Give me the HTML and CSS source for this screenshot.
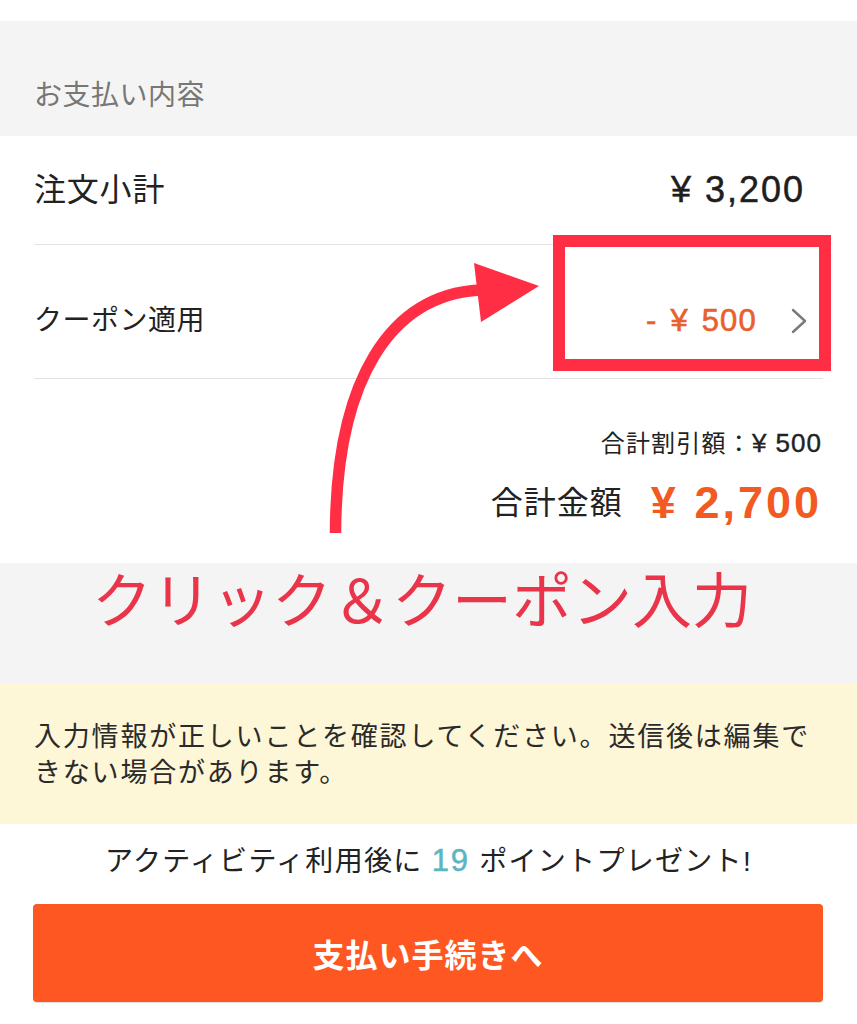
FILE: index.html
```html
<!DOCTYPE html>
<html lang="ja">
<head>
<meta charset="utf-8">
<title>お支払い内容</title>
<link rel="stylesheet" href="styles.css">
</head>
<body>
<div class="page">
  <div class="top-gap"></div>
  <div class="section-head">お支払い内容</div>
  <div class="list">
    <div class="row row-subtotal">
      <span class="label label-lg">注文小計</span>
      <span class="amount">¥ 3,200</span>
    </div>
    <div class="row row-coupon">
      <span class="label">クーポン適用</span>
      <span class="coupon-value">
        <span class="discount">- ¥ 500</span>
        <svg class="chevron" width="16" height="26" viewBox="0 0 16 26"><polyline points="2,2 14,13 2,24" fill="none" stroke="#7a7a7a" stroke-width="2.4" stroke-linecap="round" stroke-linejoin="round"/></svg>
      </span>
    </div>
  </div>
  <div class="summary">
    <div class="discount-total">合計割引額：<span class="dt-amount">¥ 500</span></div>
    <div class="grand-total"><span class="gt-label">合計金額</span><span class="gt-amount">¥ 2,700</span></div>
  </div>
  <div class="annotation-band"><span class="annotation-text">クリック＆クーポン入力</span></div>
  <div class="notice">入力情報が正しいことを確認してください。送信後は編集できない場合があります。</div>
  <div class="points">アクティビティ利用後に <span class="pts">19</span> ポイントプレゼント!</div>
  <div class="btn-wrap"><button class="pay-btn">支払い手続きへ</button></div>

  <svg class="arrow" width="857" height="1024" viewBox="0 0 857 1024">
    <path d="M335.5,533 C336,380 390,295 480,290" fill="none" stroke="#ff2e45" stroke-width="11.5"/>
    <polygon points="474,263 539,286 481,322" fill="#ff2e45"/>
  </svg>
  <div class="highlight-box"></div>
</div>
</body>
</html>
```
FILE: styles.css
```css
* { box-sizing: border-box; }
html, body { margin: 0; padding: 0; background: #ffffff; }
body {
  font-family: "Liberation Sans", "Noto Sans CJK JP", sans-serif;
  color: #222222;
}
.page {
  position: relative;
  width: 857px;
  height: 1024px;
  overflow: hidden;
}
.top-gap { height: 21px; }
.section-head {
  height: 115px;
  background: #f4f4f4;
  display: flex;
  align-items: flex-end;
  padding: 0 34px 26px;
  font-size: 28px;
  line-height: 28px;
  color: #777777;
  letter-spacing: 0.5px;
}
.list { margin: 0 34px; }
.row {
  display: flex;
  justify-content: space-between;
  align-items: center;
  border-bottom: 1px solid #e2e2e2;
}
.row-subtotal { height: 109px; }
.row-coupon { height: 134px; padding-top: 18px; }
.label {
  font-size: 28px;
  line-height: 34px;
  letter-spacing: 0.5px;
  color: #222222;
}
.label-lg { font-size: 32px; letter-spacing: 0.8px; }
.amount {
  font-size: 36px;
  line-height: 40px;
  letter-spacing: 2px;
  padding-right: 18px;
  color: #1e1e1e;
  -webkit-text-stroke: 0.5px #1e1e1e;
}
.coupon-value {
  display: flex;
  align-items: center;
  gap: 34px;
  margin-right: 16px;
}
.discount {
  font-size: 31px;
  line-height: 34px;
  letter-spacing: 1.2px;
  word-spacing: 3px;
  color: #e8602c;
  -webkit-text-stroke: 0.6px #e8602c;
}
.chevron { display: block; }
.summary {
  padding: 50px 35px 35px 0;
  display: flex;
  flex-direction: column;
  align-items: flex-end;
}
.discount-total {
  font-size: 24px;
  line-height: 28px;
  letter-spacing: 1.2px;
  color: #222222;
}
.dt-amount {
  font-size: 26px;
  letter-spacing: 1px;
  -webkit-text-stroke: 0.4px #222222;
}
.grand-total {
  margin-top: 20px;
  height: 50px;
  display: flex;
  align-items: center;
  gap: 28px;
}
.gt-label { font-size: 32px; line-height: 40px; letter-spacing: 1px; }
.gt-amount {
  font-size: 45px;
  line-height: 50px;
  font-weight: bold;
  letter-spacing: 3px;
  color: #f35a22;
}
.annotation-band {
  height: 120px;
  background: #f4f4f4;
  padding: 8px 0 0 92px;
}
.annotation-text {
  font-size: 60px;
  line-height: 64px;
  color: #e9344a;
}
.notice {
  background: #fdf6d7;
  padding: 36px 34px 33px;
  font-size: 27px;
  line-height: 36px;
  letter-spacing: 1.8px;
  color: #2a2a2a;
}
.points {
  margin-top: 20px;
  text-align: center;
  font-size: 28px;
  line-height: 34px;
  letter-spacing: 1.3px;
  color: #222222;
}
.pts {
  color: #5bb5c2;
  font-size: 31px;
  letter-spacing: 2px;
  -webkit-text-stroke: 0.5px #5bb5c2;
}
.btn-wrap { padding: 25px 34px 0 33px; }
.pay-btn {
  display: block;
  width: 100%;
  height: 98px;
  border: none;
  border-radius: 4px;
  background: #fe5722;
  color: #ffffff;
  font-family: "Liberation Sans", "Noto Sans CJK JP", sans-serif;
  font-size: 32px;
  font-weight: bold;
  letter-spacing: 1px;
  box-shadow: 0 1px 1px rgba(0,0,0,0.15);
}
.arrow {
  position: absolute;
  left: 0;
  top: 0;
  pointer-events: none;
}
.highlight-box {
  position: absolute;
  left: 553px;
  top: 235px;
  width: 278px;
  height: 136px;
  border: 12px solid #ff2e45;
  pointer-events: none;
}
```
